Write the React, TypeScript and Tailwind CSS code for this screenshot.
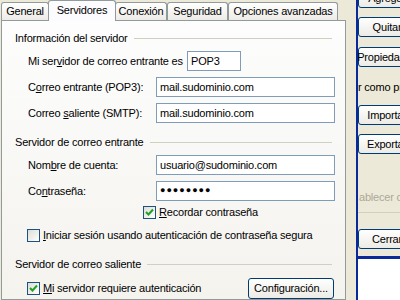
import React from "react";

const font = { fontFamily: '"Liberation Sans", Arial, sans-serif' };

const Tab = ({ label, width, active }: { label: string; width: string; active?: boolean }) =>
  active ? (
    <div
      className={`${width} relative z-10 -mb-px -mx-px h-[21px] flex items-start justify-center pt-[1px] border border-b-0 border-[#919b9c] rounded-t-[3px] bg-[#fcfcfe]`}
    >
      {label}
    </div>
  ) : (
    <div
      className={`${width} h-[18px] flex items-center justify-center border border-b-0 border-[#919b9c] rounded-t-[3px] bg-gradient-to-b from-white to-[#ecebe6]`}
    >
      {label}
    </div>
  );

const Header = ({ label, mt }: { label: string; mt: string }) => (
  <div className={`${mt} h-[14px] flex items-center pl-[13px] pr-[13px] gap-[6px]`}>
    <span className="whitespace-nowrap">{label}</span>
    <div className="flex-1 h-px bg-[#d0d0bf]" />
  </div>
);

const Field = ({ children, width }: { children: React.ReactNode; width: string }) => (
  <div className={`${width} h-[20px] flex items-center pl-[3px] border border-[#7f9db9] bg-white whitespace-nowrap overflow-hidden`}>
    {children}
  </div>
);

const Row = ({ label, value, mt }: { label: React.ReactNode; value: React.ReactNode; mt: string }) => (
  <div className={`${mt} flex items-center h-[20px]`}>
    <span className="w-[154px] pl-[26px] whitespace-nowrap">{label}</span>
    <Field width="w-[179px]">{value}</Field>
  </div>
);

const Check = ({ checked }: { checked?: boolean }) => (
  <div className="w-[13px] h-[13px] border border-[#1c5180] bg-gradient-to-br from-[#dcdcd7] to-white flex items-center justify-center shrink-0">
    {checked && (
      <svg width="9" height="9" viewBox="0 0 9 9">
        <path d="M1 4 L3.5 6.5 L8 1.5" fill="none" stroke="#21a121" strokeWidth="2" />
      </svg>
    )}
  </div>
);

const SideButton = ({ label, mt }: { label: string; mt: string }) => (
  <div
    className={`${mt} w-[58px] h-[20px] shrink-0 flex items-center justify-center whitespace-nowrap border border-[#003c74] rounded-[3px] bg-gradient-to-b from-white to-[#ecebe6]`}
  >
    {label}
  </div>
);

export default function App() {
  return (
    <div
      className="w-[400px] h-[300px] overflow-hidden bg-[#ece9d8] flex text-[11px] tracking-[-0.2px] text-black"
      style={font}
    >
      <div className="w-[356px] shrink-0 flex flex-col">
        <div className="h-[20px] flex items-end pl-px">
          <Tab label="General" width="w-[48px]" />
          <Tab label="Servidores" width="w-[68px]" active />
          <Tab label="Conexión" width="w-[52px]" />
          <Tab label="Seguridad" width="w-[61px]" />
          <Tab label="Opciones avanzadas" width="w-[110px]" />
        </div>
        <div className="ml-px w-[345px] h-[300px] border border-[#919b9c] bg-gradient-to-b from-[#fdfdfd] to-[#f4f3ee] flex flex-col">
          <Header label="Información del servidor" mt="mt-[10px]" />
          <div className="mt-[6px] flex items-center h-[20px]">
            <span className="w-[185px] pl-[26px] whitespace-nowrap">
              Mi ser<u>v</u>idor de correo entrante es
            </span>
            <Field width="w-[54px]">POP3</Field>
          </div>
          <Row
            mt="mt-[6px]"
            label={<>C<u>o</u>rreo entrante (POP3):</>}
            value="mail.sudominio.com"
          />
          <Row
            mt="mt-[6px]"
            label={<>Correo <u>s</u>aliente (SMTP):</>}
            value="mail.sudominio.com"
          />
          <Header label="Servidor de correo entrante" mt="mt-[12px]" />
          <Row
            mt="mt-[6px]"
            label={<>Nom<u>b</u>re de cuenta:</>}
            value="usuario@sudominio.com"
          />
          <Row
            mt="mt-[6px]"
            label={<>Co<u>n</u>traseña:</>}
            value={<span className="text-[9px] tracking-[1px]">●●●●●●●●</span>}
          />
          <div className="mt-[5px] h-[13px] flex items-center pl-[141px] gap-[3px]">
            <Check checked />
            <span className="whitespace-nowrap"><u>R</u>ecordar contraseña</span>
          </div>
          <div className="mt-[10px] h-[13px] flex items-center pl-[25px] gap-[3px]">
            <Check />
            <span className="whitespace-nowrap"><u>I</u>niciar sesión usando autenticación de contraseña segura</span>
          </div>
          <Header label="Servidor de correo saliente" mt="mt-[15px]" />
          <div className="mt-[7px] h-[20px] flex items-center pl-[25px] gap-[3px]">
            <Check checked />
            <span className="whitespace-nowrap"><u>M</u>i servidor requiere autenticación</span>
            <div className="ml-auto mr-[11px] w-[86px] h-[21px] flex items-center justify-center border border-[#003c74] rounded-[3px] bg-gradient-to-b from-white to-[#ecebe6]">
              Confi<u>g</u>uración...
            </div>
          </div>
        </div>
      </div>
      <div className="w-[2px] shrink-0 bg-[#0a2a9a]" />
      <div className="flex-1 flex flex-col overflow-hidden">
        <div className="flex-1 flex flex-col">
          <SideButton label="Agregar" mt="-mt-[12px]" />
          <SideButton label="Quitar" mt="mt-[9px]" />
          <SideButton label="Propiedades" mt="mt-[10px]" />
          <div className="mt-[10px] h-[20px] flex items-center whitespace-nowrap">r como predeterminado</div>
          <SideButton label="Importar" mt="mt-[8px]" />
          <SideButton label="Exportar" mt="mt-[9px]" />
          <div className="mt-[37px] h-[13px] flex items-center whitespace-nowrap text-[#aca899] pl-px">ablecer como</div>
          <div className="mt-[8px] h-px bg-[#d0d0bf]" />
          <SideButton label="Cerrar" mt="mt-[16px]" />
        </div>
        <div className="h-[3px] bg-[#0a2a9a]" />
        <div className="h-[41px] bg-white" />
      </div>
    </div>
  );
}
